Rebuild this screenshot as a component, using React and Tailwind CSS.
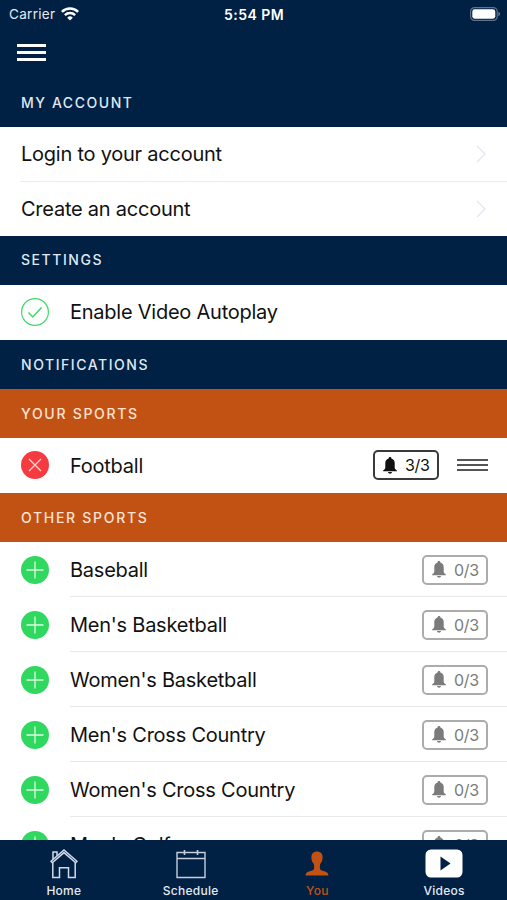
import React from 'react';

const sports = [
  "Baseball",
  "Men's Basketball",
  "Women's Basketball",
  "Men's Cross Country",
  "Women's Cross Country",
  "Men's Golf",
];

const WifiIcon = () => (
  <svg width="18" height="14" viewBox="0 0 18 14" fill="none" stroke="#fff" strokeWidth="2.5">
    <path d="M0.9 4.9a11.6 11.6 0 0 1 16.2 0" />
    <path d="M3.9 8.2a7.3 7.3 0 0 1 10.2 0" />
    <path d="M9 13.6 6.2 10.7a4 4 0 0 1 5.6 0z" fill="#fff" stroke="none" />
  </svg>
);

const BatteryIcon = () => (
  <svg width="31" height="14" viewBox="0 0 31 14" fill="none">
    <rect x="0.6" y="0.6" width="26.6" height="12.8" rx="4" stroke="#5f728a" strokeWidth="1.2" />
    <rect x="2.3" y="2.3" width="23" height="9.4" rx="2.4" fill="#fff" />
    <path d="M28.4 4.8c2.1.8 2.1 3.6 0 4.4z" fill="#6f8096" />
  </svg>
);

const BellIcon = () => (
  <svg width="14" height="17" viewBox="0 0 14 17" fill="currentColor">
    <path d="M7 0c.9 0 1.4.6 1.4 1.4C10.6 2 11.7 3.9 11.7 6v4.6c0 1.2.7 2 2.2 2.9v.7H.1v-.7c1.5-.9 2.2-1.7 2.2-2.900V6c0-2.100 1.100-4 3.300-4.600C5.600.6 6.100 0 7 0z" />
    <path d="M5 15h4c-.2 1.1-1 1.7-2 1.7S5.2 16.1 5 15z" />
  </svg>
);

const AlertBadge = ({ count, active }) => (
  <div
    className={
      active
        ? 'flex h-[30px] w-[66px] items-center rounded-[5px] border-2 border-[#3a3a3a] pl-[8px] text-[#111]'
        : 'flex h-[30px] w-[66px] items-center rounded-[5px] border-2 border-[#acacac] pl-[8px] text-[#7b7b7b]'
    }
  >
    <BellIcon />
    <span className="ml-[8px] text-[16px] leading-none tracking-[-0.3px]">{count}/3</span>
  </div>
);

const PlusCircle = () => (
  <svg width="28" height="28" viewBox="0 0 28 28" fill="none">
    <circle cx="14" cy="14" r="14" fill="#30d860" />
    <path d="M14 5.5v17M5.5 14h17" stroke="#d9fbe0" strokeWidth="1.3" />
  </svg>
);

const CrossCircle = () => (
  <svg width="28" height="28" viewBox="0 0 28 28" fill="none">
    <circle cx="14" cy="14" r="14" fill="#f53b40" />
    <path d="M8 8l12 12M20 8 8 20" stroke="#ffd5d5" strokeWidth="1.3" />
  </svg>
);

const CheckCircle = () => (
  <svg width="28" height="28" viewBox="0 0 28 28" fill="none" stroke="#3fd968">
    <circle cx="14" cy="14" r="13.4" strokeWidth="1.2" />
    <path d="M7.5 14.5l4.3 4.5L20.5 9.5" strokeWidth="1.5" />
  </svg>
);

const SectionHeader = ({ title, accent, className }) => (
  <div
    className={`${className} ${accent ? 'bg-[#c25114] text-[#fbe3d4] tracking-[1.7px]' : 'bg-[#002144] text-[#dfe8f2] tracking-[1.55px]'} flex shrink-0 items-center pl-[21px] text-[14px] font-medium`}
  >
    {title}
  </div>
);

const AccountRow = ({ label, divider }) => (
  <div className="flex h-[54.5px] shrink-0 pl-5">
    <div className={`${divider ? 'border-b border-[#ececee] pt-px' : ''} flex flex-1 items-center justify-between pl-px pr-[21px]`}>
      <span>{label}</span>
      <svg width="10" height="18" viewBox="0 0 10 18" fill="none" stroke="#e6e6f4" strokeWidth="1.5">
        <path d="M1 1l8 8-8 8" />
      </svg>
    </div>
  </div>
);

const SportRow = ({ name }) => (
  <div className="flex h-[55px] shrink-0 items-center pl-[21px]">
    <PlusCircle />
    <div className="ml-[21px] flex h-full flex-1 items-center justify-between border-b border-[#e8e8ea] pr-[19px] pt-px">
      <span className="pt-px">{name}</span>
      <AlertBadge count={0} />
    </div>
  </div>
);

const HomeIcon = () => (
  <svg width="28" height="30" viewBox="0 0 28 30" fill="none" stroke="#d0dcea" strokeWidth="1.5">
    <path d="M1 12.3 14 1l13 11.3-1.3 1.5L14 3.6 2.3 13.8z" />
    <path d="M3 10.2V3h4v3.700" />
    <path d="M2.800 13.400V28.400h6.700v-9.700h9v9.700h6.700V13.400" />
  </svg>
);

const CalendarIcon = () => (
  <svg width="30" height="30" viewBox="0 0 30 30" fill="none" stroke="#c3cfde" strokeWidth="1.4">
    <path d="M1 3.5h28v25H1zM1 9.5h28" />
    <path d="M8.500 1v5M21.500 1v5" strokeWidth="1.6" />
  </svg>
);

const PersonIcon = () => (
  <svg width="24" height="25" viewBox="0 0 24 25" fill="#c25114">
    <path d="M12 .5c3.600 0 5.600 2.200 5.600 5.700 0 2.600-.6 4.700-2.100 6.300-.7.800-.8 4-.5 5.300.3 1.300 1.500 1.800 3.200 2.200 2.800.7 4.900 1.300 5.300 4.500H.5c.4-3.200 2.500-3.800 5.300-4.500 1.700-.4 2.900-.9 3.200-2.200.3-1.300.2-4.500-.5-5.300C7 10.900 6.400 8.800 6.400 6.200 6.400 2.700 8.400.5 12 .5z" />
  </svg>
);

const VideoIcon = () => (
  <svg width="38" height="29" viewBox="0 0 38 29">
    <rect x="0.5" y="0.5" width="37" height="28" rx="5.5" fill="#fff" />
    <path d="M15.5 7.5v14l10-7z" fill="#002144" />
  </svg>
);

const tabs = [
  { label: 'Home', Icon: HomeIcon },
  { label: 'Schedule', Icon: CalendarIcon },
  { label: 'You', Icon: PersonIcon, active: true },
  { label: 'Videos', Icon: VideoIcon },
];

const App = () => {
  return (
    <div className="flex h-[900px] w-[507px] flex-col overflow-hidden bg-white font-[Inter,'Liberation_Sans',sans-serif] text-[20px] tracking-[-0.24px] text-[#111]">
      <header className="h-[79px] shrink-0 bg-[#002144] text-white">
        <div className="grid h-7 grid-cols-3 items-center pl-[9px] pr-[6px] text-[13.5px]">
          <div className="flex items-center gap-1.5 tracking-[0.3px] text-[#e3eaf2]">
            Carrier
            <WifiIcon />
          </div>
          <div className="-ml-[2px] text-center text-[14px] font-semibold tracking-[0.45px]">5:54 PM</div>
          <div className="flex justify-end">
            <BatteryIcon />
          </div>
        </div>
        <div className="ml-[17px] mt-4 flex w-[29px] flex-col gap-[4.5px]">
          <div className="h-[2.5px] bg-white" />
          <div className="h-[2.5px] bg-white" />
          <div className="h-[2.5px] bg-white" />
        </div>
      </header>

      <main className="flex min-h-0 flex-1 flex-col overflow-hidden">
        <SectionHeader title="MY ACCOUNT" className="h-[48px] pb-[2px]" />
        <AccountRow label="Login to your account" divider />
        <AccountRow label="Create an account" />
        <SectionHeader title="SETTINGS" className="h-[48.5px] pb-px" />
        <div className="flex h-[55px] shrink-0 items-center gap-[21px] pl-[21px]">
          <CheckCircle />
          <span>Enable Video Autoplay</span>
        </div>
        <SectionHeader title="NOTIFICATIONS" className="h-[49px]" />
        <SectionHeader title="YOUR SPORTS" className="h-[49px]" accent />
        <div className="flex h-[55.5px] shrink-0 items-center pl-[21px] pr-[19px]">
          <CrossCircle />
          <span className="ml-[21px] flex-1 pt-px">Football</span>
          <AlertBadge count={3} active />
          <div className="ml-[18px] flex w-[31px] flex-col gap-[3px]">
            <div className="h-[2px] bg-[#555]" />
            <div className="h-[2px] bg-[#555]" />
            <div className="h-[2px] bg-[#555]" />
          </div>
        </div>
        <SectionHeader title="OTHER SPORTS" className="h-[49px]" accent />
        {sports.map((name) => (
          <SportRow key={name} name={name} />
        ))}
      </main>

      <nav className="grid h-[60px] shrink-0 grid-cols-4 bg-[#002144]">
        {tabs.map(({ label, Icon, active }) => (
          <div key={label} className="flex flex-col items-center pl-px pt-2">
            <div className="flex h-[31px] items-center">
              <Icon />
            </div>
            <span
              className={`${active ? 'text-[#c25114]' : 'text-[#e3eaf2]'} mt-[3px] text-[12px] font-medium leading-[18px] tracking-[0.25px]`}
            >
              {label}
            </span>
          </div>
        ))}
      </nav>
    </div>
  );
};

export default App;
